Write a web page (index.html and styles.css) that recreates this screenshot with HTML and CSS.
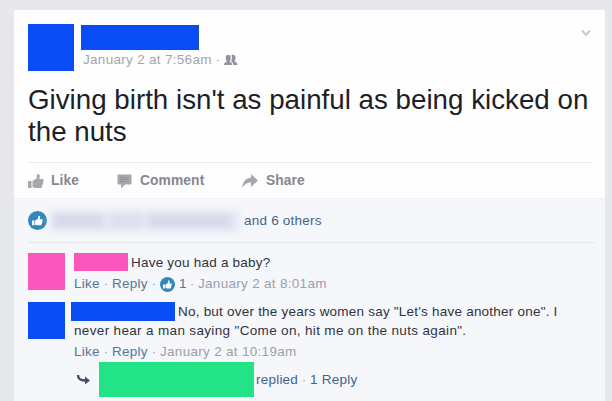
FILE: index.html
```html
<!DOCTYPE html>
<html lang="en">
<head>
<meta charset="utf-8">
<title>Post</title>
<link rel="stylesheet" href="styles.css">
</head>
<body>
<svg width="0" height="0" class="defs" aria-hidden="true">
  <symbol id="thumb" viewBox="0 0 16 16"><path d="M0 8h3.500v7H0zM4.500 8l4-2.500L9.300 1c2-.3 2.700 1 2.500 2.500L11.300 6H15.500v2.300l-.6.7.3 1.500-.8.800.1 1.500-.8.700V15H7l-2.500-1z"/></symbol>
</svg>
<article class="card">
  <header class="head">
    <div class="avatar avatar-lg blue"></div>
    <div class="who">
      <div class="name blue"></div>
      <div class="date"><span>January 2 at 7:56am</span><span class="dot">·</span>
        <svg class="friends" viewBox="0 0 14 11"><path d="M0 11c0-2 1-2.500 3-3.200C2 6.500 1.600 5 1.800 3 2 0 6.500 0 6.700 3c.1 2-.3 3.500-1.200 4.800C7.500 8.500 8 9 8 11zM7.500 1.200c1.600-1 4 0 4 2.200 0 1.800-.4 3-1.100 4.200 2 .7 3 1.300 3.200 3.400H9.200C9 9 8.400 8 7 7.300c1-1.700 1.300-4 .5-6.100z"/></svg>
      </div>
    </div>
    <svg class="chevron" viewBox="0 0 10 8"><path d="M1 1.500l4 4.500 4-4.500"/></svg>
  </header>
  <h1 class="title"><span class="t1">Giving birth isn't as painful as being kicked on</span><br><span class="t2">the nuts</span></h1>
  <nav class="actions">
    <span class="action like"><svg class="ic" viewBox="0 0 16 16"><use href="#thumb"/></svg>Like</span>
    <span class="action comment"><svg class="ic" viewBox="0 0 16 16"><path d="M1.500 1.500h12a1 1 0 0 1 1 1v8a1 1 0 0 1-1 1H8L4 15.500v-4H1.500a1 1 0 0 1-1-1v-8a1 1 0 0 1 1-1z"/><path class="lines" d="M3 4.500h9M3 6.500h9M3 8.500h6"/></svg>Comment</span>
    <span class="action share"><svg class="ic" viewBox="0 0 16 16"><path d="M0 15C1 8 4 5 9 4.800V1L16 7.500l-7 6.500v-4.500C5 9.500 3 11 0 15z"/></svg>Share</span>
  </nav>
  <section class="feedback">
    <div class="likes">
      <span class="badge"><svg viewBox="0 0 16 16"><use href="#thumb"/></svg></span>
      <span class="smudge"><i></i><i></i><i></i></span>
      <span class="others">and 6 others</span>
    </div>
    <div class="row row-1">
      <div class="avatar pink"></div>
      <div class="body">
        <div class="line"><b class="mask pink m1"></b><span class="c1">Have you had a baby?</span></div>
        <div class="meta"><span class="lk">Like</span><span class="dot">·</span><span class="rp">Reply</span><span class="dot">·</span><span class="badge small"><svg viewBox="0 0 16 16"><use href="#thumb"/></svg></span><span class="count">1</span><span class="dot">·</span><time class="d1">January 2 at 8:01am</time></div>
      </div>
    </div>
    <div class="row row-2">
      <div class="avatar blue"></div>
      <div class="body">
        <div class="line"><b class="mask blue m2"></b><span class="c2">No, but over the years women say "Let's have another one". I</span></div>
        <div class="line second"><span class="c3">never hear a man saying "Come on, hit me on the nuts again".</span></div>
        <div class="meta"><span class="lk">Like</span><span class="dot">·</span><span class="rp">Reply</span><span class="dot">·</span><time class="d2">January 2 at 10:19am</time></div>
      </div>
    </div>
    <div class="replies">
      <svg class="arrow" viewBox="0 0 13 10"><path class="stem" d="M1 0c0 4 2 5.500 8 5.500"/><path d="M8 1.500l5 4-5 4z"/></svg>
      <b class="green"></b>
      <span class="rep">replied</span><span class="dot">·</span><span class="one">1 Reply</span>
    </div>
  </section>
</article>
</body>
</html>
```
FILE: styles.css
```css
* { box-sizing: border-box; }
body {
  margin: 0;
  height: 401px;
  padding: 10px 7px 0 14px;
  overflow: hidden;
  background: #e6e8ec;
  font: 13.5px/18px "Liberation Sans", Arial, sans-serif;
  letter-spacing: .22px;
  color: #30343f;
}
svg { display: block; flex: none; }
.defs { position: absolute; }
span, time { white-space: nowrap; }
.blue { background: #0a4df5; }
.pink { background: #fb56bb; }
.green { background: #22e487; }
.card { height: 391px; background: #fefefe; display: flex; flex-direction: column; }
.head, .title, .actions { flex: none; }
.head { display: flex; height: 67px; padding: 14px 14px 0; }
.avatar { width: 37px; height: 37px; flex: none; }
.avatar-lg { width: 46px; height: 47px; }
.who { margin-left: 7px; padding-top: 1px; flex: 1; }
.name { width: 118px; height: 25px; border: 1px solid #244aba; }
.date { display: flex; align-items: center; height: 19px; padding-left: 2px; color: #a3a5ad; letter-spacing: .3px; }
.dot { width: 12px; text-align: center; color: #a3a8b4; flex: none; }
.friends { width: 14px; height: 11px; fill: #92959e; }
.chevron { width: 10px; height: 8px; margin-top: 5px; fill: none; stroke: #cacbd0; stroke-width: 2; }
.title { margin: 0; height: 85px; padding: 7px 14px 0; font-size: 27.7px; line-height: 32px; letter-spacing: .02px; font-weight: 400; color: #1c2128; }
.actions { display: flex; height: 36px; margin: 0 14px; border-top: 1px solid #e9eaee; font-size: 13.8px; letter-spacing: .1px; font-weight: 700; color: #85878e; align-items: center; }
.action { display: flex; align-items: center; }
.ic { width: 16px; height: 16px; margin-right: 7px; fill: #a6a7ae; }
.lines { stroke: #92939b; fill: none; }
.like { width: 89px; }
.comment { width: 125px; }
.share .ic { margin-right: 8px; }
.feedback { flex: 1; background: #f5f7fa; border-top: 1px solid #eeeff3; }
.likes { display: flex; align-items: center; height: 44px; margin: 0 10px 0 14px; border-bottom: 1px solid #e4e7ec; }
.badge { width: 19px; height: 19px; border-radius: 50%; background: #3387bf; display: flex; align-items: center; justify-content: center; flex: none; }
.badge svg { width: 11px; height: 11px; fill: #fff; }
.small { width: 15px; height: 15px; }
.small svg { width: 9px; height: 9px; }
.smudge { display: flex; gap: 8px; width: 190px; height: 22px; margin: 0 4px 0 3px; padding: 4px 3px; background: #e6e9f4; filter: blur(3px); }
.smudge i { width: 50px; background: #d6dbea; }
.smudge i:nth-child(2) { width: 30px; background: #dce0ee; }
.smudge i:nth-child(3) { width: 82px; background: #d6dbeb; }
.others, .rep, .one { color: #426488; }
.row { display: flex; padding-left: 14px; }
.row-1 { margin-top: 10px; height: 49px; }
.body { margin-left: 9px; }
.line { display: flex; height: 19px; }
.second { height: 18px; }
.mask { flex: none; }
.m1 { width: 54px; height: 18px; margin-right: 3px; }
.m2 { width: 104px; height: 19px; margin: 0 3px 0 -3px; }
.c1, .c2, .c3 { padding-top: 1px; }
.c3 { letter-spacing: .34px; }
.meta { display: flex; align-items: center; height: 24px; color: #5c7494; }
.row-2 .meta { padding-top: 1px; }
.lk { width: 26px; }
.rp { width: 36px; }
.count { width: 11px; padding-left: 4px; }
.meta time { color: #9c9fa9; letter-spacing: .3px; }
.replies { display: flex; align-items: center; height: 35px; margin: -1px 0 0 63px; }
.arrow { width: 13px; height: 10px; margin-right: 9px; fill: #44506a; }
.stem { fill: none; stroke: #44506a; stroke-width: 2.500; }
.replies .green { width: 155px; height: 35px; margin-right: 2px; }
```
